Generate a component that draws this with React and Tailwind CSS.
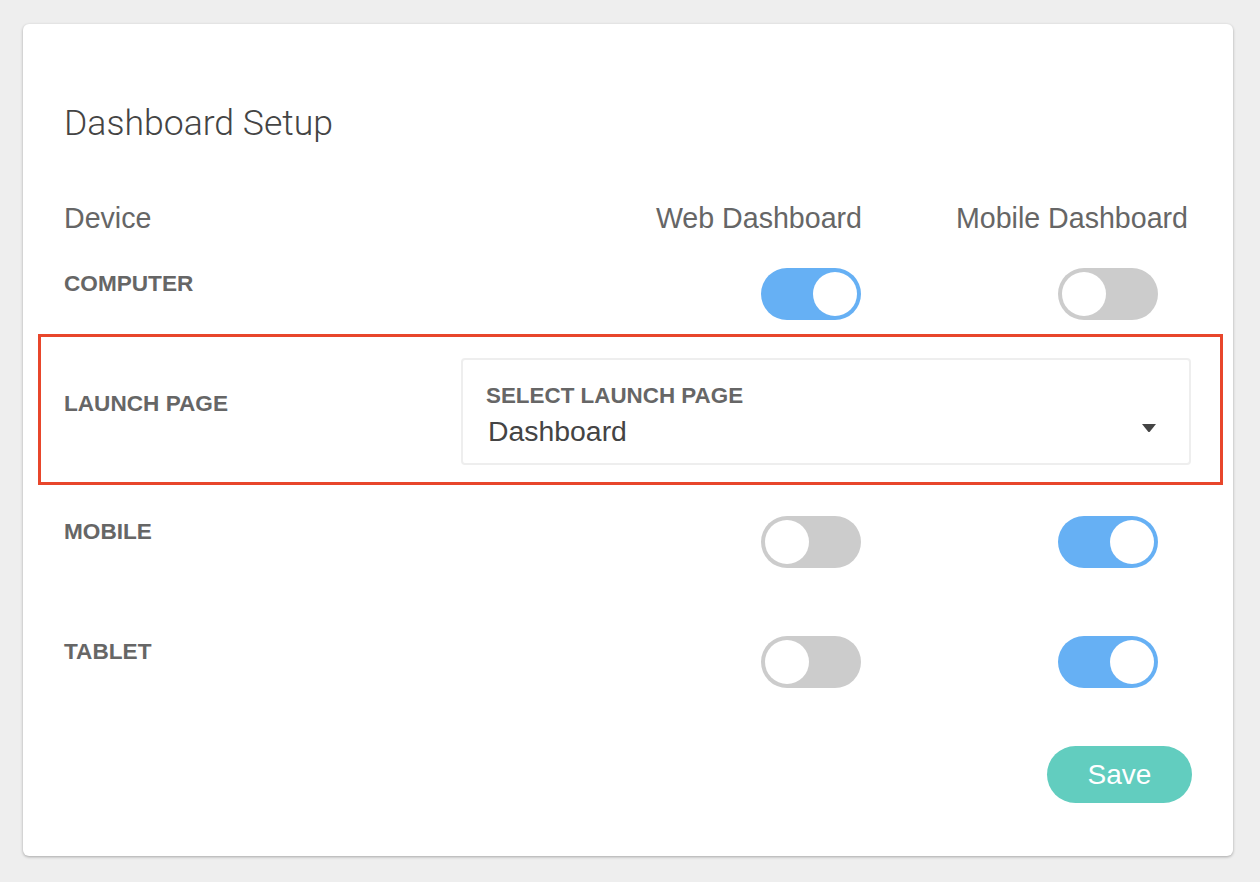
import { useState } from "react"

const Toggle = ({ on, onChange }) => (
  <button
    onClick={onChange}
    className={`flex h-[52px] w-[100px] items-center rounded-full p-[4px] ${on ? "justify-end bg-[#66b0f4]" : "justify-start bg-[#cccccc]"}`}
  >
    <span className="block h-[44px] w-[44px] rounded-full bg-white" />
  </button>
)

const DeviceRow = ({ label, web, mobile, setWeb, setMobile }) => (
  <div className="flex h-[52px] items-start">
    <div className="flex-1 pt-[5px] text-[22.6px] leading-[22px] font-bold text-[#666666]">{label}</div>
    <div className="flex w-[220px] justify-end pr-[1px]">
      <Toggle on={web} onChange={setWeb} />
    </div>
    <div className="w-[330px] pl-[196px]">
      <Toggle on={mobile} onChange={setMobile} />
    </div>
  </div>
)

export default function App() {
  const [state, setState] = useState({
    computer: [true, false],
    mobile: [false, true],
    tablet: [false, true],
  })

  const flip = (key, i) => () =>
    setState((s) => {
      const next = [...s[key]]
      next[i] = !next[i]
      return { ...s, [key]: next }
    })

  return (
    <div className="min-h-screen bg-[#eeeeee] pt-[24px] pl-[23px]" style={{ fontFamily: '"Liberation Sans", Arial, sans-serif' }}>
      <div className="flex h-[832px] w-[1210px] flex-col rounded-[6px] bg-white px-[41px] pt-[79px] shadow-[0_1px_3px_rgba(0,0,0,0.3)]">
        <h1 className="text-[35.6px] leading-[40px] font-light text-[#444444]" style={{ fontFamily: 'Roboto, "Liberation Sans", sans-serif' }}>
          Dashboard Setup
        </h1>

        <div className="mt-[61px] flex h-[28px] items-start text-[28.6px] leading-[28px] text-[#666666]">
          <div className="flex-1">Device</div>
          <div className="w-[220px] text-right">Web Dashboard</div>
          <div className="w-[330px] pr-[4px] text-right">Mobile Dashboard</div>
        </div>

        <div className="mt-[36px]">
          <DeviceRow label="COMPUTER" web={state.computer[0]} mobile={state.computer[1]} setWeb={flip("computer", 0)} setMobile={flip("computer", 1)} />
        </div>

        <div className="-mr-[31px] -ml-[26px] mt-[14px] flex h-[151px] items-start border-[3px] border-[#e8462b] pt-[21px] pr-[29px] pl-[23px]">
          <div className="flex-1 pt-[35px] text-[22.6px] leading-[22px] font-bold text-[#666666]">LAUNCH PAGE</div>
          <div className="flex h-[107px] w-[730px] items-start rounded-[4px] border-2 border-[#eeeeee] pt-[25px] pr-[33px] pl-[23px]">
            <div className="flex-1">
              <div className="text-[22.4px] leading-[22px] font-bold text-[#666666]">SELECT LAUNCH PAGE</div>
              <div className="mt-[10px] pl-[2px] text-[28.4px] leading-[28px] text-[#444444]">Dashboard</div>
            </div>
            <svg className="mt-[39px]" width="14" height="8" viewBox="0 0 14 8">
              <path d="M0 0 H14 L8 7.5 Q7 8.5 6 7.5 Z" fill="#444444" />
            </svg>
          </div>
        </div>

        <div className="mt-[31px] flex flex-col gap-[68px]">
          <DeviceRow label="MOBILE" web={state.mobile[0]} mobile={state.mobile[1]} setWeb={flip("mobile", 0)} setMobile={flip("mobile", 1)} />
          <DeviceRow label="TABLET" web={state.tablet[0]} mobile={state.tablet[1]} setWeb={flip("tablet", 0)} setMobile={flip("tablet", 1)} />
        </div>

        <div className="mt-[58px] flex justify-end">
          <button className="h-[57px] w-[145px] rounded-full bg-[#62cdbf] text-[28px] leading-[28px] text-white">Save</button>
        </div>
      </div>
    </div>
  )
}
